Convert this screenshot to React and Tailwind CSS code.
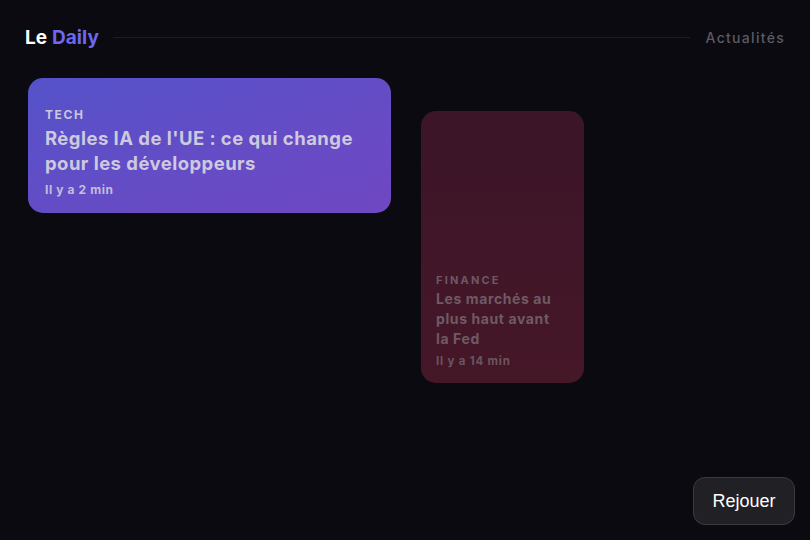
import React from "react";

export default function App() {
  return (
    <div
      className="relative w-[810px] h-[540px] overflow-hidden bg-[#0b0a10]"
      style={{ fontFamily: "Inter, 'Noto Sans', sans-serif" }}
    >
      <header className="flex items-center h-[74px] pl-[25px] pr-[25px]">
        <div className="text-[19px] font-bold tracking-[0.1px] leading-none">
          <span className="text-white">Le </span>
          <span className="text-[#6d68f2]">Daily</span>
        </div>
        <div className="flex-1 h-px bg-[#1d1c24] ml-[14px] mr-[16px]" />
        <div className="text-[14px] font-medium tracking-[1.3px] text-[#5b5a63]">Actualités</div>
      </header>

      <div className="flex items-start pl-[28px] pt-[4px]">
        <div className="w-[363px] h-[135px] rounded-[15px] bg-gradient-to-br from-[#5452c9] to-[#7047c3] px-[17px] pt-[30px]">
          <div className="text-[12px] font-bold tracking-[1.6px] text-[#c9c6de] leading-[14px]">TECH</div>
          <div className="mt-[4px] text-[18.5px] font-bold leading-[25px] text-[#cdc9de] tracking-[0.45px]">
            Règles IA de l'UE : ce qui change
            <br />
            pour les développeurs
          </div>
          <div className="mt-[6px] text-[12px] font-bold text-[#c2bedb] leading-[16px] tracking-[0.6px]">Il y a 2 min</div>
        </div>

        <div className="ml-[30px] mt-[33px] w-[163px] h-[272px] rounded-[15px] bg-gradient-to-b from-[#3c1529] to-[#451727] px-[15px] flex flex-col justify-end pb-[15px]">
          <div className="text-[11px] font-bold tracking-[2.2px] text-[#6e5863] leading-[14px]">FINANCE</div>
          <div className="mt-[2px] text-[14px] font-bold leading-[20px] text-[#6f5a64] tracking-[0.6px] pr-[4px]">
            Les marchés au plus haut avant la Fed
          </div>
          <div className="mt-[5px] text-[11.5px] font-bold text-[#6a5560] leading-[14px] tracking-[0.8px]">Il y a 14 min</div>
        </div>
      </div>

      <button
        className="absolute right-[15px] bottom-[15px] w-[102px] h-[48px] rounded-[12px] bg-[#212125] border border-[#3b3a41] text-white text-[18px]"
        style={{ fontFamily: "'Liberation Sans', Arial, sans-serif" }}
      >
        Rejouer
      </button>
    </div>
  );
}
